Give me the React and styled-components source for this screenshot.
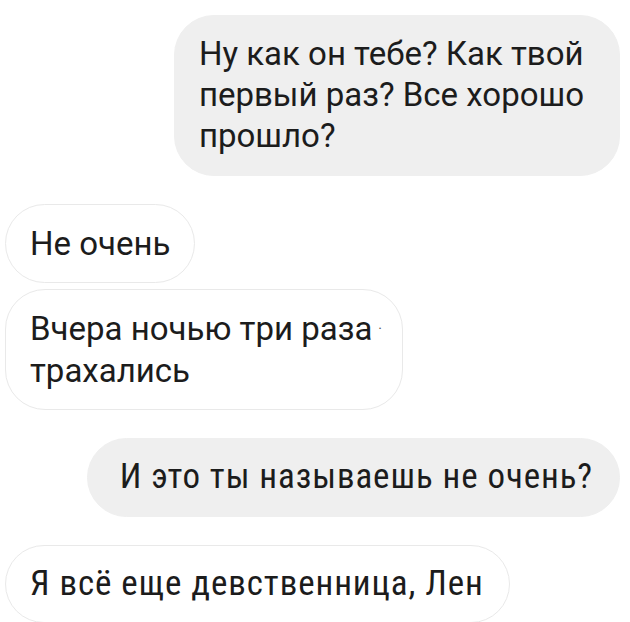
import styled, { createGlobalStyle } from "styled-components";

const GlobalStyle = createGlobalStyle`
  html, body {
    margin: 0;
    padding: 0;
    background: #ffffff;
  }
  body {
    font-family: Roboto, "Noto Sans", sans-serif;
    color: #1c1c1c;
  }
`;

const Chat = styled.div`
  width: 630px;
  height: 622px;
  box-sizing: border-box;
  padding: 15px 10px 0 5px;
  display: flex;
  flex-direction: column;
  overflow: hidden;
`;

const Bubble = styled.div`
  align-self: ${(p) => (p.$mine ? "flex-end" : "flex-start")};
  margin-top: ${(p) => p.$gap}px;
  box-sizing: border-box;
  background: ${(p) => (p.$mine ? "#efefef" : "#ffffff")};
  border: 1.5px solid ${(p) => (p.$mine ? "#efefef" : "#e9e9e9")};
  border-radius: 40px;
  padding: ${(p) => p.$pad};
  font-size: ${(p) => (p.$narrow ? "35px" : "33px")};
  line-height: 41px;
  font-family: Roboto, "Noto Sans", sans-serif;
  font-stretch: ${(p) => (p.$narrow ? "87.5%" : "100%")};
  letter-spacing: ${(p) => (p.$narrow ? "0.9px" : "normal")};
  white-space: nowrap;
`;

const Dot = styled.span`
  font-size: 14px;
  vertical-align: 6px;
  margin-left: 6px;
  color: #555;
`;

export default function App() {
  return (
    <>
      <GlobalStyle />
      <Chat>
        <Bubble $mine $gap={0} $pad="17px 35px 19px 24px">
          Ну как он тебе? Как твой
          <br />
          первый раз? Все хорошо
          <br />
          прошло?
        </Bubble>
        <Bubble $gap={28} $pad="18px 24px 18px 24px">
          Не очень
        </Bubble>
        <Bubble $gap={6} $pad="18px 20px 18px 24px">
          Вчера ночью три раза<Dot>·</Dot>
          <br />
          трахались
        </Bubble>
        <Bubble $mine $narrow $gap={28} $pad="17px 26px 19px 32px">
          И это ты называешь не очень?
        </Bubble>
        <Bubble $narrow $gap={28} $pad="17px 25px 18px 24px">
          Я всё еще девственница, Лен
        </Bubble>
      </Chat>
    </>
  );
}
